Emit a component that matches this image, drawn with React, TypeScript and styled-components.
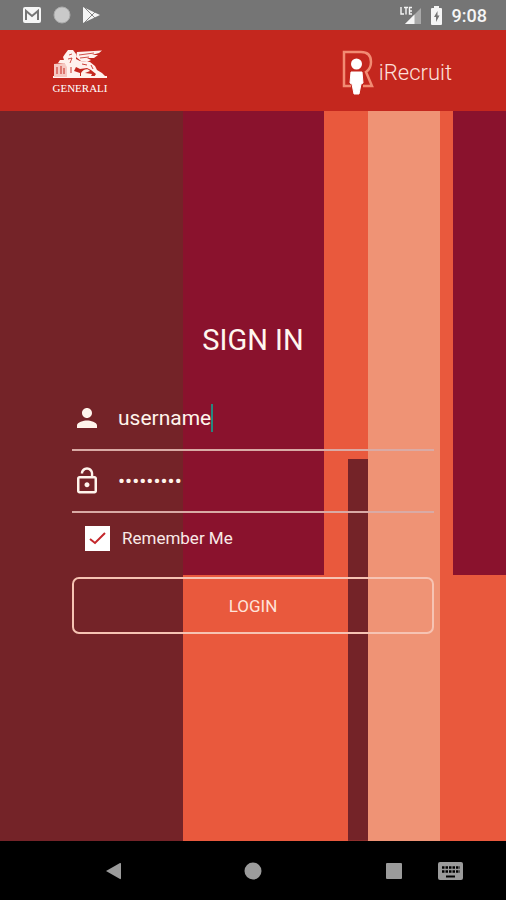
import React, { useState } from "react";
import styled, { createGlobalStyle } from "styled-components";

const color = {
  red: "#c4271e",
  brown: "#742328",
  crimson: "#8a122d",
  orange: "#e9593d",
  salmon: "#ef9375",
  nav: "#9b9b9b",
};

const GlobalStyle = createGlobalStyle`
  *, *::before, *::after { box-sizing: border-box; }
  body { margin: 0; font-family: Roboto, "Liberation Sans", sans-serif; color: #fff; }
  button, input { font: inherit; color: inherit; }
`;

const Screen = styled.div`
  display: flex;
  flex-direction: column;
  min-height: 100vh;
`;

const StatusBar = styled.div`
  display: flex;
  align-items: center;
  justify-content: space-between;
  height: 30px;
  padding: 0 19px 0 22px;
  background: #757575;
`;

const StatusGroup = styled.div<{ $gap: number }>`
  display: flex;
  align-items: center;
  gap: ${(p) => p.$gap}px;
`;

const Clock = styled.time`
  padding-top: 2px;
  font-size: 18px;
  line-height: 28px;
  font-weight: 500;
  color: #f5f5f5;
`;

const Header = styled.header`
  display: flex;
  align-items: center;
  justify-content: space-between;
  height: 81px;
  padding: 0 54px 0 52px;
  background: ${color.red};
`;

const Company = styled.div`
  display: flex;
  flex-direction: column;
  align-items: center;
  padding-top: 5px;
`;

const CompanyName = styled.span`
  font: 400 11px/18px "Liberation Serif", serif;
  color: #fff;
`;

const Product = styled.div`
  display: flex;
  align-items: center;
  gap: 5px;
  padding-top: 4px;
`;

const ProductName = styled.span`
  font-size: 22px;
  line-height: 26px;
  font-weight: 300;
  color: #fde0db;
`;

const Main = styled.main`
  display: flex;
  flex: 1;
  flex-direction: column;
  align-items: center;
  padding: 208px 72px 0;
  background:
    linear-gradient(to right, ${color.brown} 36.2%, transparent 36.2% 72.8%,
      ${color.salmon} 72.8% 86.9%, transparent 86.9%),
    linear-gradient(to right, transparent 68.8%, ${color.brown} 68.8% 72.8%, transparent 72.8%)
      bottom / 100% 52.3% no-repeat,
    linear-gradient(to right, transparent 36.2%, ${color.crimson} 36.2% 64.1%,
      transparent 64.1% 89.5%, ${color.crimson} 89.5%)
      top / 100% 63.6% no-repeat,
    ${color.orange};
`;

const Title = styled.h1`
  margin: 0 0 26px;
  font-size: 29px;
  line-height: 42px;
  font-weight: 400;
  color: #fff6ef;
`;

const Form = styled.form`
  display: flex;
  flex-direction: column;
  width: 100%;
`;

const Field = styled.label<{ $height: number }>`
  display: flex;
  align-items: center;
  gap: 16px;
  height: ${(p) => p.$height}px;
  border-bottom: 2px solid #d9aaa5;
`;

const FieldIcon = styled.svg`
  width: 30px;
  height: 30px;
  flex: none;
  fill: #fff4ec;
`;

const TextInput = styled.input<{ $fit?: boolean }>`
  ${(p) => (p.$fit ? "field-sizing: content; max-width: 100%;" : "flex: 1;")}
  min-width: 0;
  height: 32px;
  padding: 0;
  border: 0;
  outline: 0;
  background: none;
  font-size: 21px;
  color: #fff4ec;
`;

const InputWithCaret = styled.span`
  display: flex;
  align-items: center;
  flex: 1;
  min-width: 0;
`;

const Caret = styled.span`
  width: 2px;
  height: 28px;
  background: #27877f;
`;

const Remember = styled.label`
  display: flex;
  align-items: center;
  gap: 12px;
  height: 50px;
  padding-left: 13px;
  font-size: 17px;
  color: #f9e9e7;
`;

const CheckBox = styled.input`
  appearance: none;
  width: 25px;
  height: 25px;
  margin: 0;
  background: #fff;
  grid-area: 1 / 1;
`;

const CheckWrap = styled.span`
  display: grid;
  place-items: center;
`;

const CheckMark = styled.svg`
  grid-area: 1 / 1;
  z-index: 1;
  pointer-events: none;
`;

const LoginButton = styled.button`
  height: 57px;
  margin-top: 14px;
  border: 2px solid #f6c3b3;
  border-radius: 7px;
  background: none;
  font-size: 17px;
  color: #ffe4da;
`;

const NavBar = styled.nav`
  display: grid;
  grid-template-columns: 1fr auto 1fr;
  align-items: center;
  height: 59px;
  background: #000;
`;

const NavSide = styled.div<{ $end?: boolean }>`
  display: flex;
  justify-content: flex-end;
  gap: 32px;
  padding-right: ${(p) => (p.$end ? 42 : 122)}px;
`;

const NavButton = styled.button`
  display: flex;
  padding: 0;
  border: 0;
  background: none;
  color: ${color.nav};
`;

const Lion = () => (
  <svg width="56" height="30" viewBox="0 0 56 30" fill="#fff1ed" aria-hidden="true">
    <path d="M1 27H55V29H1Z" />
    <path d="M2 15 12 14 15 17V28H2Z" fill="#f6c9c3" />
    <path d="M5 18V25M9 17V25M12 19V25" stroke={color.red} strokeWidth="1" />
    <path d="M13 5 16 1 21 1 24 5 24 10 28 12 38 13 43 17 45 21 50 24 54 28H42L44 25 39 21 35 19 28 20 24 18 22 22 28 24 28 27H15V18L12 14 6 14 8 11 12 11 11 8Z" />
    <path d="M25 3 50 1.500 47 4 40 6 46 6 42 9 35 9 39 11 35 13 29 12 24 8Z" />
    <path d="M27 6 42 4M28 9 37 8M17 6 20 5M16 10 20 9 18 14" fill="none" stroke={color.red} strokeWidth=".8" />
    <path d="M29 24C31 20 36 19 38 22L33 24 40 25 39 27H29Z" />
    <path d="M19 18V24M30 15 35 16M39 16 41 20" fill="none" stroke={color.red} strokeWidth=".9" />
  </svg>
);

const RecruitMark = () => (
  <svg width="32" height="46" viewBox="0 0 32 46" aria-hidden="true">
    <path
      d="M9 36H2V2H19C26 2 29 6 29 12C29 17 27 20 24 22L30 36H21"
      fill="none"
      stroke="#f28b73"
      strokeWidth="2.5"
    />
    <circle cx="14.5" cy="14" r="5.500" fill="#fff" />
    <path d="M9 22H20L21 33 19 34 17 44H12L10 34 8 33Z" fill="#fff" stroke="#fff" strokeLinejoin="round" />
  </svg>
);

export default function App() {
  const [username, setUsername] = useState("username");
  const [password, setPassword] = useState("password1");
  const [remember, setRemember] = useState(true);

  return (
    <Screen>
      <GlobalStyle />
      <StatusBar>
        <StatusGroup $gap={11}>
          <svg width="20" height="16" viewBox="0 0 20 16" aria-hidden="true">
            <rect x="1" width="18" height="16" rx="2" fill="#f5f5f5" />
            <path d="M4 13V4L10 9 16 4V13" fill="none" stroke="#757575" strokeWidth="2" />
          </svg>
          <svg width="18" height="18" viewBox="0 0 18 18" aria-hidden="true">
            <circle cx="9" cy="9" r="8" fill="#c9c9c9" stroke="#ababab" />
          </svg>
          <svg width="18" height="18" viewBox="0 0 18 18" aria-hidden="true">
            <path d="M1 1 18 9 1 17Z" fill="#f5f5f5" />
            <path d="M2 1 13 12M2 17 13 6" stroke="#858585" />
          </svg>
        </StatusGroup>
        <StatusGroup $gap={10}>
          <svg width="22" height="19" viewBox="0 0 22 19" aria-hidden="true">
            <path d="M22 2V18H6Z" fill="#a9a9a9" />
            <path d="M15.500 8.500V18H6Z" fill="#f5f5f5" />
            <path d="M2 1V8H5M5 1.500H9M7 1.500V8.500M13 1.500H10.500V8H13M10.500 5H13" fill="none" stroke="#f5f5f5" strokeWidth="1.400" />
          </svg>
          <svg width="11" height="19" viewBox="0 0 11 19" aria-hidden="true">
            <path d="M3 0H8V2H10Q11 2 11 3V18Q11 19 10 19H1Q0 19 0 18V3Q0 2 1 2H3Z" fill="#f5f5f5" />
            <path d="M6.500 5 3 11H5V16L8.500 9.500H6.500Z" fill="#757575" />
          </svg>
          <Clock>9:08</Clock>
        </StatusGroup>
      </StatusBar>

      <Header>
        <Company>
          <Lion />
          <CompanyName>GENERALI</CompanyName>
        </Company>
        <Product>
          <RecruitMark />
          <ProductName>iRecruit</ProductName>
        </Product>
      </Header>

      <Main>
        <Title>SIGN IN</Title>
        <Form onSubmit={(e) => e.preventDefault()}>
          <Field $height={64}>
            <FieldIcon viewBox="0 0 24 24" aria-hidden="true">
              <path d="M12 12c2.210 0 4-1.790 4-4s-1.790-4-4-4-4 1.790-4 4 1.790 4 4 4zm0 2c-2.670 0-8 1.340-8 4v2h16v-2c0-2.660-5.330-4-8-4z" />
            </FieldIcon>
            <InputWithCaret>
              <TextInput
                $fit
                aria-label="Username"
                value={username}
                onChange={(e) => setUsername(e.target.value)}
              />
              <Caret />
            </InputWithCaret>
          </Field>
          <Field $height={62}>
            <FieldIcon viewBox="0 0 24 24" aria-hidden="true">
              <path d="M12 17c1.100 0 2-.9 2-2s-.9-2-2-2-2 .9-2 2 .9 2 2 2zm6-9h-1V6c0-2.760-2.240-5-5-5S7 3.240 7 6h1.900c0-1.710 1.390-3.100 3.100-3.100s3.100 1.390 3.100 3.100v2H6c-1.100 0-2 .9-2 2v10c0 1.100.9 2 2 2h12c1.100 0 2-.9 2-2V10c0-1.100-.9-2-2-2zm0 12H6V10h12v10z" />
            </FieldIcon>
            <TextInput
              type="password"
              aria-label="Password"
              value={password}
              onChange={(e) => setPassword(e.target.value)}
            />
          </Field>
          <Remember>
            <CheckWrap>
              <CheckBox
                type="checkbox"
                checked={remember}
                onChange={(e) => setRemember(e.target.checked)}
              />
              {remember && (
                <CheckMark width="17" height="13" viewBox="0 0 17 13" aria-hidden="true">
                  <path d="M1 7 6 11 16 1" fill="none" stroke="#c4272b" strokeWidth="2" />
                </CheckMark>
              )}
            </CheckWrap>
            Remember Me
          </Remember>
          <LoginButton type="submit">LOGIN</LoginButton>
        </Form>
      </Main>

      <NavBar>
        <NavSide>
          <NavButton aria-label="Back">
            <svg width="16" height="18" viewBox="0 0 16 18" fill="currentColor">
              <path d="M0 9 14 1Q15 .5 15 2V16Q15 17.500 14 17Z" />
            </svg>
          </NavButton>
        </NavSide>
        <NavButton aria-label="Home">
          <svg width="18" height="18" viewBox="0 0 18 18" fill="currentColor">
            <circle cx="9" cy="9" r="8.500" />
          </svg>
        </NavButton>
        <NavSide $end>
          <NavButton aria-label="Recent apps">
            <svg width="24" height="18" viewBox="0 0 24 18" fill="currentColor">
              <rect x="4" y="1" width="16" height="16" rx="1" />
            </svg>
          </NavButton>
          <NavButton aria-label="Keyboard">
            <svg width="26" height="18" viewBox="0 0 26 18" fill="currentColor">
              <rect width="25" height="18" rx="2" />
              <path d="M4 5.500H22M4 9.500H22" stroke="#000" strokeWidth="2.500" strokeDasharray="2.500 1" />
              <path d="M8 14.500H17" stroke="#000" strokeWidth="2" />
            </svg>
          </NavButton>
        </NavSide>
      </NavBar>
    </Screen>
  );
}
